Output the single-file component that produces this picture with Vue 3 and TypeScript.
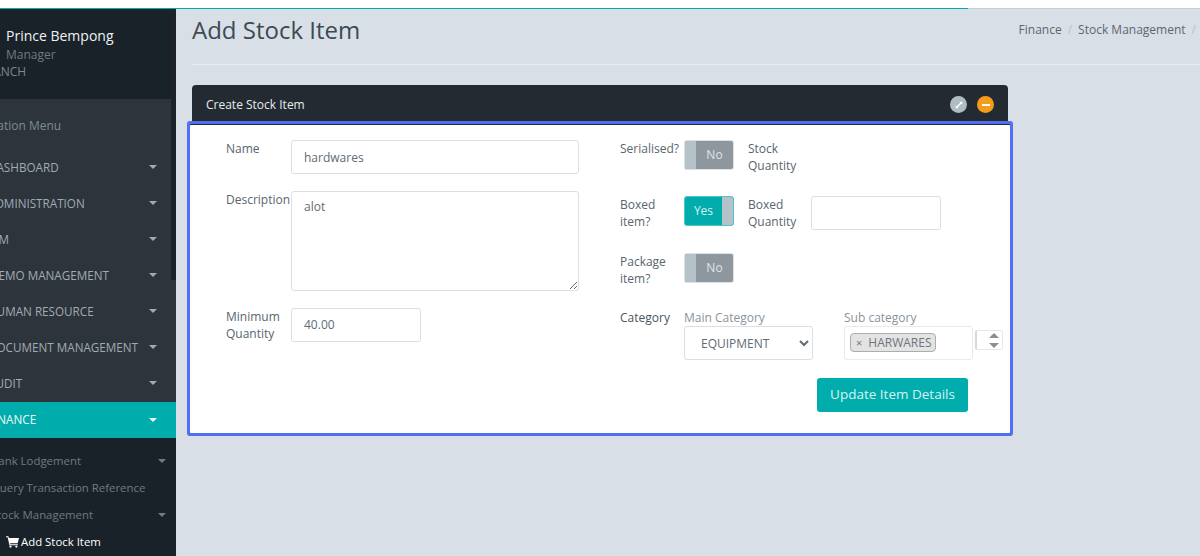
<script setup lang="ts">
const menu: string[] = ['DASHBOARD', 'ADMINISTRATION', 'IRM', 'MEMO MANAGEMENT', 'HUMAN RESOURCE', 'DOCUMENT MANAGEMENT', 'AUDIT']
</script>

<template>
  <div class="page">
    <div class="topbar"><div class="progress"></div></div>
    <div class="shell">
      <aside class="sidebar">
        <div class="scrollthumb"></div>
        <div class="user">
          <div class="uname">Prince Bempong</div>
          <div class="urole">Manager</div>
          <div class="ubranch">BRANCH</div>
        </div>
        <div class="menu">
          <div class="navhead">Navigation Menu</div>
          <div v-for="m in menu" :key="m" class="item">
            <span class="label">{{ m }}</span><i class="caret"></i>
          </div>
        </div>
        <div class="item active"><span class="label">FINANCE</span><i class="caret"></i></div>
        <div class="sub">
          <div class="subitem"><span>Bank Lodgement</span><i class="caret"></i></div>
          <div class="subitem"><span>Query Transaction Reference</span></div>
          <div class="subitem"><span>Stock Management</span><i class="caret"></i></div>
          <div class="subitem current">
            <svg class="cart" viewBox="0 0 16 14" width="13" height="12">
              <path fill="#fff" d="M0 0h3l.5 2H16l-1.6 6.4H5l.3 1.3h9.2v1.3H4.2L2 1.3H0z" />
              <circle fill="#fff" cx="5.5" cy="12.6" r="1.4" />
              <circle fill="#fff" cx="12.8" cy="12.6" r="1.4" />
            </svg>
            <span>Add Stock Item</span>
          </div>
        </div>
      </aside>

      <main class="main">
        <header class="head">
          <h1>Add Stock Item</h1>
          <nav class="crumbs">
            <span>Finance</span><em>/</em><span>Stock Management</span><em class="last">/</em>
          </nav>
        </header>

        <section class="card">
          <div class="cardhead">
            <span class="cardtitle">Create Stock Item</span>
            <span class="dot grey">
              <svg viewBox="0 0 12 12" width="10" height="10">
                <path d="M3 9l6-6" stroke="#fff" stroke-width="1.6" fill="none" />
                <path d="M6.5 2H10v3.5zM2 6.5V10h3.5z" fill="#fff" />
              </svg>
            </span>
            <span class="dot orange"><i class="minus"></i></span>
          </div>
          <div class="cardbody">
            <div class="col left">
              <div class="row">
                <label>Name</label>
                <input class="ctl wide" type="text" value="hardwares" />
              </div>
              <div class="row">
                <label>Description</label>
                <textarea class="ctl wide area">alot</textarea>
              </div>
              <div class="row">
                <label>Minimum Quantity</label>
                <input class="ctl short" type="text" value="40.00" />
              </div>
            </div>

            <div class="col right">
              <div class="rrow">
                <label class="rl">Serialised?</label>
                <div class="toggle off"><i class="knob"></i><span>No</span></div>
                <label class="rl2">Stock Quantity</label>
              </div>
              <div class="rrow">
                <label class="rl">Boxed item?</label>
                <div class="toggle on"><span>Yes</span><i class="knob"></i></div>
                <label class="rl2">Boxed Quantity</label>
                <input class="ctl short" type="text" />
              </div>
              <div class="rrow">
                <label class="rl">Package item?</label>
                <div class="toggle off"><i class="knob"></i><span>No</span></div>
              </div>
              <div class="rrow">
                <label class="rl cat">Category</label>
                <div class="field main-cat">
                  <div class="flabel">Main Category</div>
                  <select class="ctl sel"><option>EQUIPMENT</option></select>
                </div>
                <div class="field">
                  <div class="flabel">Sub category</div>
                  <div class="multi">
                    <span class="chip"><b>×</b>HARWARES</span>
                  </div>
                </div>
                <div class="spin"><i class="up"></i><i class="down"></i></div>
              </div>
              <div class="actions"><button class="btn" type="button">Update Item Details</button></div>
            </div>
          </div>
        </section>
      </main>
    </div>
  </div>
</template>

<style>
html, body { margin: 0; background: #fff; overflow: hidden; }
</style>

<style scoped>
.page {
  height: 556px;
  width: 1200px;
  overflow: hidden;
  font-family: "Open Sans", "Noto Sans", sans-serif;
  font-size: 12px;
  line-height: 17px;
  color: #58666e;
  display: flex;
  flex-direction: column;
}
.topbar { height: 9px; background: #fff; flex: none; position: relative; box-sizing: border-box; border-bottom: 1px solid #c9ced3; }
.progress { height: 1px; width: 968px; background: #00acac; position: absolute; left: 0; bottom: -1px; }
.shell { flex: 1; display: flex; min-height: 0; background: #d9dfe7; }

.sidebar { width: 176px; flex: none; display: flex; flex-direction: column; background: #1a2229; position: relative; overflow: hidden; }
.scrollthumb { position: absolute; top: 0; right: 0; width: 5px; height: 271px; background: #1c2228; }
.user { height: 90px; box-sizing: border-box; padding: 17px 0 0 6px; background: #1a2229; flex: none; }
.uname { color: #eef1f3; font-size: 14px; font-weight: 500; line-height: 20px; }
.urole { color: #6f7a84; line-height: 17px; }
.ubranch { color: #7c8791; margin-left: -28px; line-height: 17px; }
.menu { background: #2d343c; flex: none; height: 303px; }
.navhead { color: #7f8a93; height: 50px; box-sizing: border-box; padding-top: 18px; margin-left: -34px; white-space: nowrap; }
.item { height: 36px; display: flex; align-items: center; justify-content: space-between; padding-right: 19px; color: #a1abb3; box-sizing: border-box; white-space: nowrap; font-size: 11.7px; }
.label { margin-left: -12px; }
.caret { display: block; width: 0; height: 0; border-left: 4px solid transparent; border-right: 4px solid transparent; border-top: 4px solid currentColor; flex: none; }
.active { background: #00acac; color: #f2fbfb; padding-bottom: 1px; }
.sub { padding-top: 9px; background: #1a2229; flex: 1; }
.subitem { height: 27px; display: flex; align-items: center; justify-content: space-between; padding-right: 10px; color: #6f7a83; margin-left: -9px; white-space: nowrap; font-size: 11.4px; }
.current { justify-content: flex-start; color: #fff; margin-left: 6px; gap: 2px; }

.main { flex: 1; min-width: 0; padding-left: 16px; }
.head { height: 56px; box-sizing: border-box; border-bottom: 1px solid #e8ecf0; display: flex; justify-content: space-between; margin-bottom: 20px; }
h1 { margin: 0; font-size: 24px; font-weight: 400; line-height: 33px; padding-top: 4px; color: #3d4a54; }
.crumbs { display: flex; padding-top: 12px; color: #5b6770; white-space: nowrap; }
.crumbs em { font-style: normal; color: #b8c0c7; margin: 0 6px; }
.crumbs em.last { margin-right: 4px; }

.card { width: 816px; }
.cardhead { height: 39px; background: #242a31; border-radius: 4px 4px 0 0; display: flex; align-items: center; padding: 0 14px 0 14px; box-sizing: border-box; color: #e6e9ec; gap: 10px; }
.cardtitle { flex: 1; font-weight: 500; color: #e8ebee; }
.dot { width: 17px; height: 17px; border-radius: 50%; display: flex; align-items: center; justify-content: center; }
.grey { background: #b0bcc4; }
.orange { background: #f59c1a; }
.minus { width: 8px; height: 2px; background: #fff; display: block; }

.cardbody {
  margin: 0 -2px;
  display: flex;
  background: #fff;
  box-shadow: 0 0 0 3px #4f6ff5, inset 0 1px 0 #242a31;
  border-radius: 1px;
  padding: 16px 0 21px 36px;
  gap: 41px;
}
.col { display: flex; flex-direction: column; }
.left { width: 353px; gap: 17px; }
.row { display: flex; }
.row label { width: 65px; flex: none; white-space: normal; color: #58666e; }
.ctl {
  font-family: inherit;
  font-size: 12px;
  color: #5f6b74;
  background: #fff;
  border: 1px solid #d9dfe3;
  border-radius: 3px;
  box-sizing: border-box;
  height: 34px;
  padding: 0 12px;
  outline: none;
}
.wide { width: 288px; }
.short { width: 130px; }
.area { height: 100px; padding: 6px 12px; line-height: 17px; display: block; }
.left .short { padding-bottom: 2px; }

.right { flex: 1; display: grid; grid-template-rows: 56px 57px 56px 69px auto; }
.rrow { display: flex; align-items: flex-start; }
.rl { width: 64px; flex: none; }
.rl2 { width: 63px; margin-left: 14px; flex: none; }
.cat { color: #4a565f; }
.toggle { width: 50px; height: 30px; box-sizing: border-box; border-radius: 3px; display: flex; overflow: hidden; border: 1px solid #dce1e5; color: #dfe4e8; }
.toggle span { flex: 1; text-align: center; line-height: 27px; }
.knob { width: 11px; background: #b6c2c9; display: block; flex: none; }
.off { background: #8e979e; }
.on { background: #00acac; border-color: #4cc5c5; color: #d8f3f3; }

.field { width: 129px; flex: none; }
.main-cat { margin-right: 31px; }
.flabel { color: #8a949c; }
.sel { width: 129px; height: 34px; padding: 0 0 0 12px; }
.multi { height: 34px; width: 129px; box-sizing: border-box; border: 1px solid #e6ebef; border-radius: 3px; padding: 6px 5px; }
.chip { display: inline-flex; align-items: center; height: 19px; width: 86px; box-sizing: border-box; background: #e3e3e3; border: 1px solid #adadad; border-radius: 4px; color: #6d767e; padding-left: 5px; gap: 6px; font-size: 12px; }
.chip b { font-weight: 400; color: #777; font-size: 11px; }
.spin { width: 28px; height: 20px; box-sizing: border-box; margin: 21px 0 0 2px; border: 1px solid #e4e8eb; border-radius: 2px; display: flex; flex-direction: column; align-items: flex-end; justify-content: center; gap: 5px; padding-right: 3px; border-left: 2px solid #d5d9dd; }
.up, .down { display: block; width: 0; height: 0; border-left: 5px solid transparent; border-right: 5px solid transparent; }
.up { border-bottom: 5px solid #8b8f93; }
.down { border-top: 5px solid #8b8f93; }
.actions { display: flex; margin-left: 197px; }
.btn { width: 151px; height: 34px; background: #00acac; border: 0; border-radius: 3px; color: #d8f3f3; font-family: inherit; font-size: 13.5px; padding: 0 0 2px; }
</style>
